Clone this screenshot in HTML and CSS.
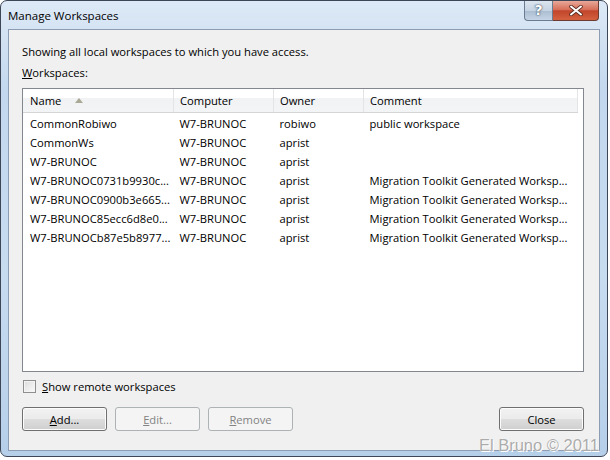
FILE: index.html
```html
<!DOCTYPE html>
<html lang="en">
<head>
    <meta charset="UTF-8">
    <title>Manage Workspaces</title>
    <link rel="stylesheet" href="styles.css">
</head>
<body>
    <div class="window">
        <div class="titlebar">
            <span class="title">Manage Workspaces</span>
            <div class="caption-buttons">
                <div class="caption-help">?</div>
                <div class="caption-close">
                    <svg width="14" height="11" viewBox="0 0 14 11">
                        <path d="M2 1.5 L12 9.5 M12 1.5 L2 9.5" stroke="#5a2a20" stroke-width="3.6" stroke-linecap="round"/>
                        <path d="M2 1.5 L12 9.5 M12 1.5 L2 9.5" stroke="#fff" stroke-width="2" stroke-linecap="round"/>
                    </svg>
                </div>
            </div>
        </div>
        <div class="client">
            <div class="intro">Showing all local workspaces to which you have access.</div>
            <div class="list-label"><u>W</u>orkspaces:</div>
            <div class="listbox">
                <table class="grid">
                    <thead>
                        <tr>
                            <th class="col-name">Name<span class="sort-arrow"></span></th>
                            <th class="col-computer">Computer</th>
                            <th class="col-owner">Owner</th>
                            <th class="col-comment">Comment</th>
                        </tr>
                    </thead>
                    <tbody>
                        <tr class="first"><td>CommonRobiwo</td><td>W7-BRUNOC</td><td>robiwo</td><td>public workspace</td></tr>
                        <tr><td>CommonWs</td><td>W7-BRUNOC</td><td>aprist</td><td></td></tr>
                        <tr><td>W7-BRUNOC</td><td>W7-BRUNOC</td><td>aprist</td><td></td></tr>
                        <tr><td>W7-BRUNOC0731b9930c...</td><td>W7-BRUNOC</td><td>aprist</td><td>Migration Toolkit Generated Worksp...</td></tr>
                        <tr><td>W7-BRUNOC0900b3e665...</td><td>W7-BRUNOC</td><td>aprist</td><td>Migration Toolkit Generated Worksp...</td></tr>
                        <tr><td>W7-BRUNOC85ecc6d8e0...</td><td>W7-BRUNOC</td><td>aprist</td><td>Migration Toolkit Generated Worksp...</td></tr>
                        <tr><td>W7-BRUNOCb87e5b8977...</td><td>W7-BRUNOC</td><td>aprist</td><td>Migration Toolkit Generated Worksp...</td></tr>
                    </tbody>
                </table>
            </div>
            <div class="check-row">
                <span class="checkbox"></span>
                <span><u>S</u>how remote workspaces</span>
            </div>
            <div class="button-row">
                <button class="win-button"><u>A</u>dd...</button>
                <button class="win-button disabled"><u>E</u>dit...</button>
                <button class="win-button disabled"><u>R</u>emove</button>
                <span class="spacer"></span>
                <button class="win-button">Close</button>
            </div>
        </div>
        <div class="watermark">El Bruno © 2011</div>
    </div>
</body>
</html>
```

FILE: styles.css
```css
body {
    margin: 0;
    background-color: #fff;
    font-family: "Open Sans", "Noto Sans", sans-serif;
    font-size: 11.2px;
}
.window {
    position: relative;
    box-sizing: border-box;
    width: 608px;
    height: 457px;
    border: 1px solid #3c4656;
    border-radius: 7px;
    background: linear-gradient(180deg, #dde9f6 0%, #c3d8ee 20%, #c8dcf0 60%, #b6cfe9 100%);
    display: flex;
    flex-direction: column;
}
.titlebar {
    height: 28px;
    display: flex;
    justify-content: space-between;
    align-items: flex-start;
}
.title {
    margin: 7px 0 0 7px;
    color: #000;
    font-size: 11.5px;
}
.caption-buttons {
    display: flex;
    margin-right: 8px;
}
.caption-help {
    box-sizing: border-box;
    width: 29px;
    height: 20px;
    border: 1px solid #6b7c90;
    border-top: none;
    border-radius: 0 0 0 4px;
    background: linear-gradient(180deg, #dbe5ef 0%, #c6d3e2 50%, #aabccf 51%, #c5d5e6 100%);
    color: #fff;
    font-family: "DejaVu Sans", sans-serif;
    font-weight: bold;
    font-size: 14px;
    text-align: center;
    line-height: 19px;
    text-shadow: 0 0 2px #34475c, 0 0 1px #34475c;
}
.caption-close {
    box-sizing: border-box;
    width: 46px;
    height: 20px;
    border: 1px solid #6b3a30;
    border-top: none;
    border-left: none;
    border-radius: 0 0 4px 0;
    background: linear-gradient(180deg, #e8a899 0%, #d7705a 45%, #c2452b 52%, #d4613f 100%);
    display: flex;
    align-items: center;
    justify-content: center;
}
.client {
    box-sizing: border-box;
    flex: 1;
    margin: 0 7px 5px 7px;
    border: 1px solid #8c9db3;
    background-color: #f0f0f0;
    padding: 13px 15px 0 13px;
    color: #000;
}
.intro {
    height: 17px;
    line-height: 17px;
}
.list-label {
    margin-top: 4px;
    height: 17px;
    line-height: 17px;
}
.listbox {
    box-sizing: border-box;
    margin-top: 7px;
    height: 284px;
    border: 1px solid #828790;
    background-color: #fff;
    overflow: hidden;
}
.grid {
    border-collapse: collapse;
    table-layout: fixed;
    width: 555px;
}
.grid th {
    height: 23px;
    padding: 0 0 0 6px;
    text-align: left;
    font-weight: normal;
    background: linear-gradient(180deg, #fff 0%, #fff 40%, #f1f2f4 41%, #f3f4f6 100%);
    border-right: 1px solid #e3e4e6;
    border-bottom: 1px solid #d5d5d5;
    white-space: nowrap;
}
.grid th.col-name {
    width: 143px;
    padding-left: 7px;
}
.col-computer {
    width: 93px;
}
.col-owner {
    width: 83px;
}
.sort-arrow {
    display: inline-block;
    margin-left: 14px;
    width: 0;
    height: 0;
    border-left: 4px solid transparent;
    border-right: 4px solid transparent;
    border-bottom: 5px solid #aaa996;
    vertical-align: 2px;
}
.grid td {
    height: 19px;
    padding: 0 0 0 6px;
    white-space: nowrap;
    overflow: hidden;
}
.grid td:first-child {
    padding-left: 7px;
}
.grid tr.first td {
    padding-top: 1px;
}
.check-row {
    margin-top: 7px;
    display: flex;
    align-items: center;
    height: 14px;
}
.checkbox {
    box-sizing: border-box;
    width: 13px;
    height: 13px;
    margin: 0 6px 0 1px;
    border: 1px solid #8f8f8f;
    background: linear-gradient(135deg, #dcdcdc 0%, #fbfbfb 100%);
    box-shadow: inset 0 0 0 1px #f4f4f4;
}
.button-row {
    margin-top: 14px;
    display: flex;
    gap: 8px;
}
.spacer {
    flex: 1;
}
.win-button {
    box-sizing: border-box;
    width: 85px;
    height: 24px;
    margin: 0;
    padding: 0;
    border: 1px solid #707070;
    border-radius: 3px;
    background: linear-gradient(180deg, #f2f2f2 0%, #ebebeb 50%, #dddddd 51%, #cfcfcf 100%);
    box-shadow: inset 0 0 0 1px #fcfcfc;
    font-family: "Open Sans", "Noto Sans", sans-serif;
    font-size: 11.2px;
    color: #000;
}
.win-button.disabled {
    border-color: #adb2b5;
    background: #f4f4f4;
    color: #838383;
    box-shadow: none;
}
.watermark {
    position: absolute;
    right: 8px;
    bottom: 1px;
    font-family: "Liberation Sans", Arial, sans-serif;
    font-size: 16.5px;
    color: #ababab;
    text-shadow: 0 0 1px #fff, 1px 1px 0 #fff;
}
```
